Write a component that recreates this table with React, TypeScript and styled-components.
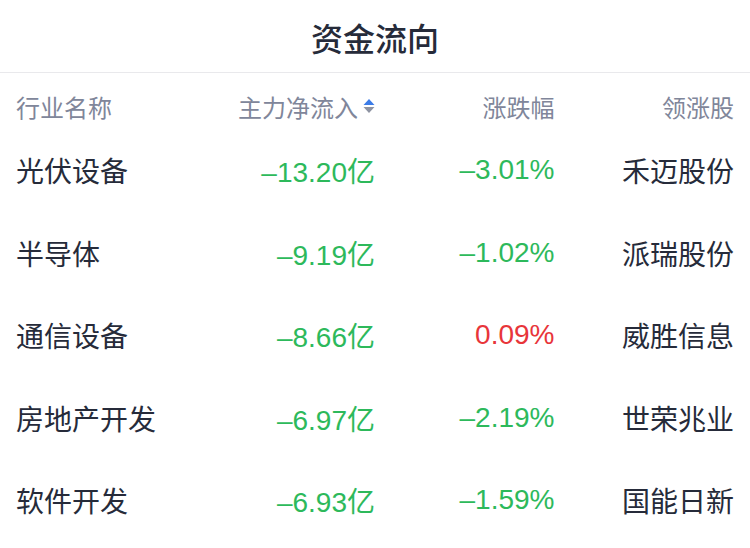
import React from 'react';
import styled, { createGlobalStyle } from 'styled-components';

const GlobalStyle = createGlobalStyle`
  html, body {
    margin: 0;
    padding: 0;
    background: #ffffff;
  }
  body {
    font-family: "Noto Sans CJK SC", "Noto Sans", sans-serif;
  }
`;

const Page = styled.div`
  width: 750px;
  height: 548px;
  background: #fff;
  overflow: hidden;
`;

const Title = styled.div`
  height: 73px;
  display: flex;
  align-items: center;
  justify-content: center;
  font-size: 32px;
  font-weight: 500;
  color: #262b3a;
  border-bottom: 1px solid #e9e9ec;
  box-sizing: border-box;
  padding-top: 2px;
`;

const Table = styled.div`
  padding: 10px 16px 0;
`;

const Row = styled.div<{ $head?: boolean }>`
  display: grid;
  grid-template-columns: repeat(4, 1fr);
  align-items: center;
  height: ${(p) => (p.$head ? '46px' : '82.5px')};
`;

const Cell = styled.div<{ $align?: 'left' | 'right' }>`
  display: flex;
  align-items: center;
  justify-content: ${(p) => (p.$align === 'left' ? 'flex-start' : 'flex-end')};
  white-space: nowrap;
`;

const HeadText = styled.span`
  font-size: 24px;
  color: #80869a;
`;

const NameText = styled.span`
  font-size: 28px;
  color: #262b3a;
`;

const NumText = styled.span<{ $up?: boolean }>`
  font-family: "Liberation Sans", "Noto Sans CJK SC", sans-serif;
  font-size: 28px;
  font-weight: 400;
  color: ${(p) => (p.$up ? '#e8353a' : '#2db95b')};
`;

const SortIcon = () => (
  <svg width="12" height="16" viewBox="0 0 12 16" style={{ marginLeft: 5 }}>
    <path d="M6 1 L11.5 7 H0.5 Z" fill="#3c7ce8" />
    <path d="M6 15 L11.5 9 H0.5 Z" fill="#8e93a2" />
  </svg>
);

const rows = [
  { name: '光伏设备', flow: '–13.20亿', pct: '–3.01%', up: false, lead: '禾迈股份' },
  { name: '半导体', flow: '–9.19亿', pct: '–1.02%', up: false, lead: '派瑞股份' },
  { name: '通信设备', flow: '–8.66亿', pct: '0.09%', up: true, lead: '威胜信息' },
  { name: '房地产开发', flow: '–6.97亿', pct: '–2.19%', up: false, lead: '世荣兆业' },
  { name: '软件开发', flow: '–6.93亿', pct: '–1.59%', up: false, lead: '国能日新' },
];

export default function App() {
  return (
    <Page>
      <GlobalStyle />
      <Title>资金流向</Title>
      <Table>
        <Row $head>
          <Cell $align="left"><HeadText>行业名称</HeadText></Cell>
          <Cell><HeadText>主力净流入</HeadText><SortIcon /></Cell>
          <Cell><HeadText>涨跌幅</HeadText></Cell>
          <Cell><HeadText>领涨股</HeadText></Cell>
        </Row>
        {rows.map((r) => (
          <Row key={r.name}>
            <Cell $align="left"><NameText>{r.name}</NameText></Cell>
            <Cell><NumText>{r.flow}</NumText></Cell>
            <Cell><NumText $up={r.up}>{r.pct}</NumText></Cell>
            <Cell><NameText>{r.lead}</NameText></Cell>
          </Row>
        ))}
      </Table>
    </Page>
  );
}
